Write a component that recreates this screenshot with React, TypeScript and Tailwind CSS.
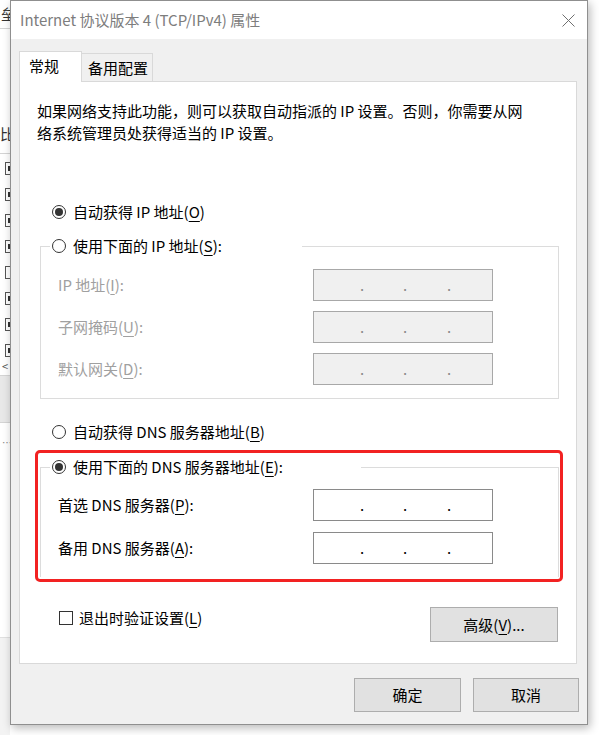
import React from "react";

const U = ({ c }: { c: string }) => (
  <span className="underline decoration-1 underline-offset-[3px]">{c}</span>
);

function Radio({ checked }: { checked?: boolean }) {
  return (
    <span className="flex h-[14px] w-[14px] shrink-0 items-center justify-center rounded-full border border-[#333333] bg-white">
      {checked && <span className="h-[8px] w-[8px] rounded-full bg-[#333333]" />}
    </span>
  );
}

function IpBox({ disabled }: { disabled?: boolean }) {
  return (
    <div
      className={
        disabled
          ? "flex h-[32px] w-[180px] items-center border border-[#a8a8a8] bg-[#f0f0f0] text-[#8a8a8a]"
          : "flex h-[32px] w-[180px] items-center border border-[#8a8a8a] bg-white text-black"
      }
    >
      <span className="w-[46px]" />
      <span className="w-[4px] text-center">.</span>
      <span className="w-[39px]" />
      <span className="w-[4px] text-center">.</span>
      <span className="w-[40px]" />
      <span className="w-[4px] text-center">.</span>
    </div>
  );
}

function Field({ label, disabled }: { label: React.ReactNode; disabled?: boolean }) {
  return (
    <div className="flex h-[32px] items-center">
      <span className={disabled ? "w-[255px] text-[#a0a0a0]" : "w-[255px]"}>{label}</span>
      <IpBox disabled={disabled} />
    </div>
  );
}

function CloseIcon() {
  return (
    <svg width="13" height="13" viewBox="0 0 13 13" className="shrink-0">
      <path d="M0.5 0.5 L12.5 12.5 M12.5 0.5 L0.5 12.5" stroke="#6f6f6f" strokeWidth="1" fill="none" />
    </svg>
  );
}

function BackWindow() {
  const boxes = [true, true, true, true, false, true, true, true];
  return (
    <div className="flex h-full w-[10px] shrink-0 flex-col overflow-hidden bg-white text-[#333]">
      <div className="flex h-[29px] shrink-0 items-center justify-end border-b border-[#d4d4d4]">
        <span className="-mr-[6px] shrink-0">垒</span>
      </div>
      <div className="flex h-[125px] shrink-0 items-end justify-end border-b border-[#d4d4d4] pb-[8px]">
        <span className="-mr-[5px] shrink-0">比</span>
      </div>
      <div className="flex shrink-0 flex-col gap-[13px] pt-[8px]">
        {boxes.map((on, i) => (
          <div key={i} className="ml-[5px] flex h-[13px] w-[13px] shrink-0 items-center border border-[#555]">
            {on && <span className="ml-[2px] h-[5px] w-[2px] bg-[#333]" />}
          </div>
        ))}
      </div>
      <div className="flex h-[18px] shrink-0 items-center pl-[2px] text-[11px] text-[#555]">&lt;</div>
      <div className="h-[48px] shrink-0 border-y border-[#d4d4d4] bg-[#e8e8e8]" />
      <div className="flex h-[40px] shrink-0 items-center justify-end">
        <span className="-mr-[2px] shrink-0 text-[10px] text-[#888]">…</span>
      </div>
      <div className="h-[175px] shrink-0 border-b border-[#e0e0e0]" />
      <div className="flex-1 bg-[#f3f3f3]" />
    </div>
  );
}

export default function App() {
  return (
    <div className="flex h-[735px] w-[599px] overflow-hidden bg-white font-['Noto_Sans_CJK_SC',sans-serif] text-[15px] leading-[22px] text-black">
      <BackWindow />
      <div className="flex h-[725px] w-[578px] shrink-0 flex-col border border-[#8f8f8f] bg-[#f0f0f0] shadow-[2px_3px_9px_rgba(0,0,0,0.28)]">
        <div className="flex h-[38px] shrink-0 items-center justify-between bg-white pl-[9px] pr-[12px] text-[#7d7d7d]">
          <span>Internet 协议版本 4 (TCP/IPv4) 属性</span>
          <CloseIcon />
        </div>

        <div className="flex flex-1 flex-col px-[8px] pt-[12px]">
          <div className="flex h-[30px] items-end">
            <div className="relative z-10 -mb-px flex h-[31px] w-[63px] items-center border border-b-0 border-[#d9d9d9] bg-white pb-[2px] pl-[9px]">
              常规
            </div>
            <div className="flex h-[28px] w-[71px] items-center border border-b-0 border-l-0 border-[#d9d9d9] bg-[#f0f0f0] pl-[6px]">
              备用配置
            </div>
          </div>

          <div className="mr-[2px] flex h-[583px] flex-col border border-[#d9d9d9] bg-white">
            <p className="ml-[17px] mt-[18px] whitespace-nowrap">
              如果网络支持此功能，则可以获取自动指派的 IP 设置。否则，你需要从网
              <br />
              络系统管理员处获得适当的 IP 设置。
            </p>

            <div className="ml-[32px] mt-[57px] flex h-[22px] items-center gap-[7px]">
              <Radio checked />
              <span>
                自动获得 IP 地址(<U c="O" />)
              </span>
            </div>

            <fieldset className="ml-[20px] mt-[12px] w-[519px] border border-[#dcdcdc]">
              <legend className="ml-[9px] w-[252px] pl-[2px]">
                <div className="flex h-[22px] items-center gap-[7px]">
                  <Radio />
                  <span>
                    使用下面的 IP 地址(<U c="S" />):
                  </span>
                </div>
              </legend>
              <div className="flex flex-col gap-[10px] pb-[13px] pl-[17px] pt-[12px]">
                <Field disabled label={<>IP 地址(<U c="I" />):</>} />
                <Field disabled label={<>子网掩码(<U c="U" />):</>} />
                <Field disabled label={<>默认网关(<U c="D" />):</>} />
              </div>
            </fieldset>

            <div className="ml-[32px] mt-[22px] flex h-[22px] items-center gap-[7px]">
              <Radio />
              <span>
                自动获得 DNS 服务器地址(<U c="B" />)
              </span>
            </div>

            <div className="ml-[15px] mt-[7px] w-[528px] rounded-[5px] border-[3px] border-[#f22222] pb-[2px] pl-[2px] pr-[1px] pt-[3px]">
              <fieldset className="w-[519px] border border-b-0 border-[#dcdcdc]">
                <legend className="ml-[9px] w-[311px] pl-[2px]">
                  <div className="flex h-[22px] items-center gap-[7px]">
                    <Radio checked />
                    <span>
                      使用下面的 DNS 服务器地址(<U c="E" />):
                    </span>
                  </div>
                </legend>
                <div className="flex flex-col gap-[11px] pb-[13px] pl-[17px] pt-[11px]">
                  <Field label={<>首选 DNS 服务器(<U c="P" />):</>} />
                  <Field label={<>备用 DNS 服务器(<U c="A" />):</>} />
                </div>
              </fieldset>
            </div>

            <div className="ml-[39px] mr-[18px] mt-[25px] flex items-start justify-between">
              <label className="flex h-[22px] items-center gap-[6px]">
                <span className="h-[14px] w-[14px] border border-[#333333] bg-white" />
                <span>
                  退出时验证设置(<U c="L" />)
                </span>
              </label>
              <button className="flex h-[35px] w-[128px] items-center justify-center border border-[#adadad] bg-[#e1e1e1]">
                高级(<U c="V" />)...
              </button>
            </div>
          </div>

          <div className="mt-[14px] flex justify-end gap-[12px]">
            <button className="flex h-[34px] w-[107px] items-center justify-center border border-[#adadad] bg-[#e1e1e1]">
              确定
            </button>
            <button className="flex h-[34px] w-[106px] items-center justify-center border border-[#adadad] bg-[#e1e1e1]">
              取消
            </button>
          </div>
        </div>
      </div>
    </div>
  );
}
